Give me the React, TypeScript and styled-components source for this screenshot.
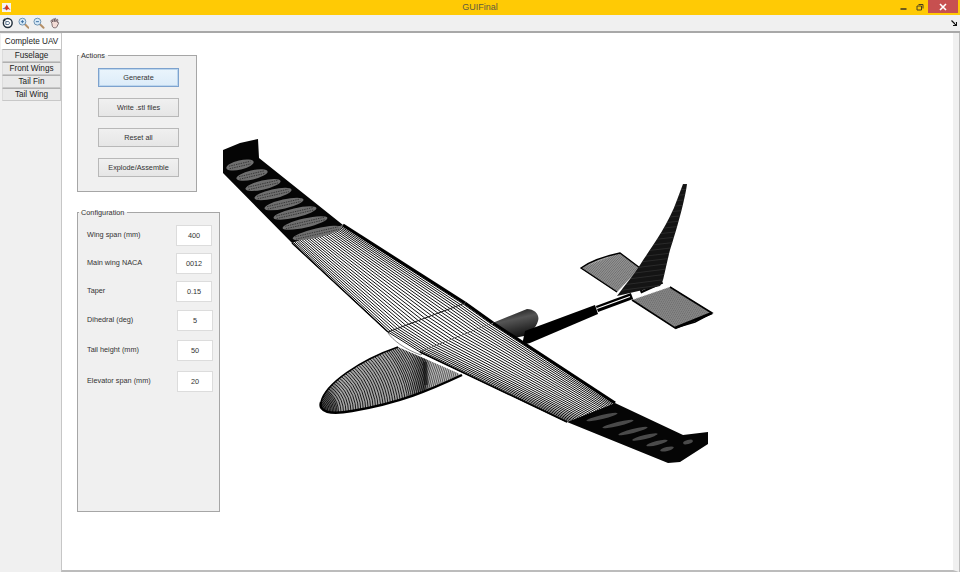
import React from "react";
import styled, { createGlobalStyle } from "styled-components";

const Global = createGlobalStyle`
  html, body { margin: 0; padding: 0; background: #f0f0f0; }
  #root { width: 960px; height: 572px; overflow: hidden; }
`;

const Win = styled.div`
  width: 960px; height: 572px; display: flex; flex-direction: column;
  font-family: "Liberation Sans", Arial, sans-serif; color: #333; background: #f0f0f0;
`;
const TitleBar = styled.div`
  height: 15px; background: #ffca05; display: flex; align-items: flex-start; flex: none;
`;
const AppIcon = styled.div`
  width: 9px; height: 9px; margin: 3px 0 0 2px; background: #f4f4f4; display: flex;
`;
const Title = styled.div`
  flex: 1; text-align: center; font-size: 9px; line-height: 15px; color: #5f5a40; padding-left: 54px;
`;
const WinControls = styled.div`
  display: flex; align-items: flex-start; gap: 1px; padding-right: 2px;
`;
const WinBtn = styled.div<{ $w: number }>`
  width: ${p => p.$w}px; height: 13px; display: flex; align-items: center; justify-content: center;
`;
const CloseBtn = styled.div`
  width: 30px; height: 13px; background: #c75050; display: flex; align-items: center; justify-content: center;
`;
const ToolBar = styled.div`
  height: 16px; flex: none; display: flex; align-items: center; padding: 0 3px 0 2px; gap: 4px;
  background: #f0f0f0; border-bottom: 2px solid #a8a8a8;
`;
const ToolIcon = styled.div`
  width: 11.5px; height: 12px; display: flex; align-items: center; justify-content: center;
`;
const Spacer = styled.div`flex: 1;`;
const Body = styled.div`
  flex: 1; display: flex; min-height: 0;
`;
const Side = styled.div`
  width: 61px; flex: none; padding: 1px 0 0 1px; box-sizing: border-box; display: flex; flex-direction: column;
  align-items: stretch;
`;
const ActiveTab = styled.div`
  height: 15px; background: #fff; font-size: 8.2px; line-height: 16px; text-align: center; color: #222;
  margin-right: -1px;
`;
const Tab = styled.div`
  height: 13px; box-sizing: border-box; margin-left: 1px; background: #e9e9e9; border: 1px solid #c8c8c8;
  border-top-color: #b0b0b0; border-left-color: #dcdcdc; font-size: 8.2px; line-height: 11px; text-align: center; color: #222;
`;
const Frame = styled.div`
  flex: 1; display: flex; background: #fff; min-width: 0; border-left: 1px solid #c6c6c6;
  border-bottom: 2px solid #bcbcbc; border-right: 6px solid #f0f0f0;
  box-shadow: 1px 0 0 #bcbcbc;
  margin-right: 1px;
  padding-bottom: 2px;
`;
const Column = styled.div`
  width: 158px; flex: none; padding: 17px 0 0 15px; box-sizing: border-box; display: flex; flex-direction: column;
  gap: 15px; align-items: flex-start;
`;
const Group = styled.fieldset<{ $w: number; $h: number }>`
  width: ${p => p.$w}px; height: ${p => p.$h}px; box-sizing: border-box; margin: 0; padding: 0;
  background: #f0f0f0; border: 1px solid #a6a6a6; display: block; min-width: 0;
`;
const Legend = styled.legend`
  font-size: 7.3px; line-height: 10px; padding: 0 3px 0 2px; margin-left: 1px; color: #333;
  transform: translateY(1px);
`;
const Actions = styled.div`
  display: flex; flex-direction: column; gap: 11px; padding: 8px 0 0 20px;
`;
const Btn = styled.button<{ $primary?: boolean }>`
  width: 81px; height: 19px; box-sizing: border-box; padding: 0; font-family: inherit; font-size: 7.3px; color: #333;
  background: ${p => (p.$primary ? "linear-gradient(#eaf4fc, #dcecf9)" : "linear-gradient(#f0f0f0, #e6e6e6)")};
  border: 1px solid ${p => (p.$primary ? "#7da2ce" : "#b8b8b8")};
  box-shadow: ${p => (p.$primary ? "0 0 0 1px #bcd6ee inset" : "none")};
`;
const Rows = styled.div`
  display: flex; flex-direction: column; padding-top: 8px;
`;
const Row = styled.div<{ $top: number; $inset: number }>`
  display: flex; align-items: flex-start; margin-top: ${p => p.$top}px; padding-left: 9px; height: 20px;
  & > input { margin-left: ${p => p.$inset}px; }
`;
const Label = styled.label`
  width: 89px; flex: none; font-size: 7.3px; line-height: 10px; padding-top: 4.5px; color: #333;
`;
const Field = styled.input`
  width: 36px; height: 21px; box-sizing: border-box; padding: 0; border: 1px solid #dcdcdc; background: #fff;
  font-family: inherit; font-size: 7.3px; text-align: center; color: #333; outline: none;
`;
const Canvas = styled.svg`
  flex: 1; display: block; width: 733px; height: 535px; filter: blur(0.4px);
`;

type P = [number, number];
const lerp = (a: P, b: P, t: number): P => [a[0] + (b[0] - a[0]) * t, a[1] + (b[1] - a[1]) * t];
const f = (n: number) => n.toFixed(1);

function spanLines(a: P, b: P, c: P, d: P, n: number) {
  let s = "";
  for (let i = 0; i <= n; i++) {
    const u = i / n;
    const t = 0.72 * u + 0.28 * (1 - Math.cos(Math.PI * u)) / 2;
    const p = lerp(a, b, t);
    const q = lerp(c, d, t);
    s += `M${f(p[0])} ${f(p[1])}L${f(q[0])} ${f(q[1])}`;
  }
  return s;
}
function hatch(a: P, b: P, c: P, d: P, n: number) {
  let s = "";
  for (let i = 0; i <= n; i++) {
    const p = lerp(a, b, i / n);
    const q = lerp(c, d, i / n);
    s += `M${f(p[0])} ${f(p[1])}L${f(q[0])} ${f(q[1])}`;
  }
  return s;
}
const poly = (...pts: P[]) => pts.map(p => p.join(",")).join(" ");

const leftPods: [number, number, number][] = [
  [240, 165, 14], [252, 175, 16], [263, 185, 18], [273, 194, 19],
  [284, 204, 20], [295, 213, 22], [305, 223, 23], [317, 233, 25],
];
const rightPods: [number, number, number][] = [
  [602, 417, 16], [618, 424, 16], [633, 431, 15], [645, 437, 13], [657, 443, 11], [667, 449, 7], [688, 442, 5],
];
const FIN = "M683 184L687 184C685 200 676 232 670 250C667 262 665 272 663 280L660 286L617 296C625 285 633 276 640 265C648 252 668 226 677 200Z";

function Plane() {
  const rings: number[] = [];
  let r = 3;
  while (r < 150) { rings.push(r); r += r < 25 ? 1.5 : r < 95 ? 2.5 : 2; }
  return (
    <Canvas viewBox="220 33 733 535" xmlns="http://www.w3.org/2000/svg">
      <defs>
        <clipPath id="body">
          <path d="M321 402C325 384 360 360 398 347L462 375C430 390 400 403 352 411C330 415 318 412 321 402Z" />
        </clipPath>
        <clipPath id="fin"><path d={FIN} /></clipPath>
        <linearGradient id="rear" x1="0" y1="0" x2="0.35" y2="1">
          <stop offset="0" stopColor="#000" />
          <stop offset="0.45" stopColor="#555" />
          <stop offset="1" stopColor="#111" />
        </linearGradient>
        <linearGradient id="fade" x1="0" y1="0" x2="1" y2="0">
          <stop offset="0" stopColor="#000" stopOpacity="0.6" />
          <stop offset="0.14" stopColor="#000" stopOpacity="0" />
          <stop offset="0.62" stopColor="#000" stopOpacity="0" />
          <stop offset="0.73" stopColor="#000" stopOpacity="0.5" />
          <stop offset="0.78" stopColor="#fff" stopOpacity="0.25" />
          <stop offset="1" stopColor="#fff" stopOpacity="0.3" />
        </linearGradient>
      </defs>

      {/* rear fuselage and boom */}
      <path d="M490 324L527 309C535 309 540 315 538 321C536 328 530 333 524 336L505 340Z" fill="url(#rear)" />
      <polygon points={poly([525, 331], [595, 305], [598, 314], [530, 343], [522, 345])} fill="#000" />
      <path d="M597 309L632 296" stroke="#000" strokeWidth="6.5" />
      <path d="M597 308.5L630 296.5" stroke="#fff" strokeWidth="1.3" />
      <path d="M640 291L662 281" stroke="#000" strokeWidth="5.5" />
      <path d="M642 290L661 282" stroke="#fff" strokeWidth="1.1" />

      {/* tail surfaces */}
      <path d="M581 268C592 260 606 256 620 253L640 268L617 292Z" fill="#a8a8a8" />
      <path d={hatch([581, 268], [620, 253], [617, 292], [640, 268], 26)} stroke="#000" strokeWidth="0.35" fill="none" />
      <path d="M617 292L581 268C592 260 606 256 620 253L640 268" fill="none" stroke="#000" strokeWidth="1.4" />
      <polygon points={poly([632, 300], [670, 287], [712, 313], [695, 322], [675, 328])} fill="#a8a8a8" />
      <path d={hatch([632, 300], [670, 287], [675, 328], [712, 313], 28)} stroke="#000" strokeWidth="0.35" fill="none" />
      <path d="M632 300L675 328L695 322L712 313L670 287" fill="none" stroke="#000" strokeWidth="1.6" />
      <path d="M675 328L712 313" fill="none" stroke="#000" strokeWidth="2.6" />
      <path d={FIN} fill="#141414" />
      <g clipPath="url(#fin)">
        <path d={hatch([617, 296], [683, 184], [663, 290], [690, 184], 20)} stroke="#666" strokeWidth="0.4" fill="none" opacity="0.7" />
      </g>

      {/* fuselage */}
      <path d="M321 402C325 384 360 360 398 347L462 375C430 390 400 403 352 411C330 415 318 412 321 402Z" fill="#a6a6a6" />
      <g clipPath="url(#body)">
        <g fill="none" stroke="#000" strokeWidth="0.85">
          {rings.map(v => <circle key={v} cx={313} cy={412} r={v} />)}
        </g>
        <rect x="321" y="340" width="142" height="76" fill="url(#fade)" />
        <path d="M425 362L426 385" stroke="#111" strokeWidth="4" opacity="0.6" />
      </g>
      <path d="M321 402C325 384 360 360 398 347" fill="none" stroke="#000" strokeWidth="1.6" />
      <path d="M462 375C430 390 400 403 352 411C330 415 318 412 321 402" fill="none" stroke="#000" strokeWidth="2.4" />

      {/* wing root cut-out */}
      <path d="M388 333C393 340 404 349 421 355L426 349L392 328Z" fill="#fff" stroke="#333" strokeWidth="0.6" />

      {/* left wing */}
      <polygon points={poly([292, 243], [343, 225], [465, 303], [388, 332])} fill="#fff" />
      <path d={spanLines([343, 225], [292, 243], [465, 303], [388, 332], 27)} stroke="#000" strokeWidth="0.95" fill="none" />
      <path d="M343 225L465 303" stroke="#000" strokeWidth="3" />
      <path d="M292 243L388 332" stroke="#000" strokeWidth="1.4" />

      {/* centre section */}
      <polygon points={poly([388, 332], [465, 303], [493, 323], [420, 352])} fill="#fff" />
      <path d={spanLines([465, 303], [388, 332], [493, 323], [420, 352], 27)} stroke="#000" strokeWidth="0.95" fill="none" />
      <path d="M465 303L493 323" stroke="#000" strokeWidth="3" />
      <path d="M388 332L465 303M420 352L493 323" stroke="#111" strokeWidth="1" fill="none" />

      {/* right wing */}
      <polygon points={poly([420, 352], [493, 323], [615, 403], [567, 422])} fill="#fff" />
      <path d={spanLines([493, 323], [420, 352], [615, 403], [567, 422], 27)} stroke="#000" strokeWidth="0.95" fill="none" />
      <path d="M493 323L615 403" stroke="#000" strokeWidth="3" />
      <path d="M420 352L567 422" stroke="#000" strokeWidth="1.6" />

      {/* left tip */}
      <polygon points={poly([223, 150], [240, 143], [258, 139], [259, 158], [343, 225], [292, 243], [223, 173])} fill="#050505" />
      {leftPods.map(([x, y, rx]) => (
        <g key={x} transform={`rotate(-13 ${x} ${y})`}>
          <ellipse cx={x} cy={y} rx={rx} ry={4.6} fill="#6f6f6f" />
          <path d={`M${x - rx + 3} ${y - 1.3}H${x + rx - 3}M${x - rx + 3} ${y + 1.3}H${x + rx - 3}`} stroke="#222" strokeWidth="0.7" strokeDasharray="1.4 1" />
        </g>
      ))}

      {/* right tip */}
      <polygon points={poly([567, 422], [615, 403], [683, 435], [708, 432], [708, 444], [680, 462], [668, 463])} fill="#050505" />
      {rightPods.map(([x, y, rx]) => (
        <g key={x} transform={`rotate(-14 ${x} ${y})`}>
          <ellipse cx={x} cy={y} rx={rx} ry={2} fill="#4a4a4a" />
        </g>
      ))}
    </Canvas>
  );
}

const LensIcon = ({ minus }: { minus?: boolean }) => (
  <svg width="12" height="12" viewBox="0 0 12 12">
    <path d="M7 7L11 11" stroke="#b58f66" strokeWidth="2" strokeLinecap="round" />
    <circle cx="4.6" cy="4.6" r="3.6" fill="#d7e9f7" stroke="#6a8fb0" strokeWidth="1" />
    <path d={minus ? "M3 4.6H6.2" : "M3 4.6H6.2M4.6 3V6.2"} stroke="#3b6ea0" strokeWidth="1" />
  </svg>
);

const rows: { label: string; value: string; top: number; inset: number }[] = [
  { label: "Wing span (mm)", value: "400", top: 0, inset: 0 },
  { label: "Main wing NACA", value: "0012", top: 8, inset: 0 },
  { label: "Taper", value: "0.15", top: 8, inset: 0 },
  { label: "Dihedral (deg)", value: "5", top: 9, inset: 1 },
  { label: "Tail height (mm)", value: "50", top: 10, inset: 1 },
  { label: "Elevator span (mm)", value: "20", top: 11, inset: 1 },
];

export default function App() {
  return (
    <Win>
      <Global />
      <TitleBar>
        <AppIcon>
          <svg width="9" height="9" viewBox="0 0 9 9">
            <path d="M0.5 6L3 4.5L4.8 1.5L6.5 4.5L8.5 7L6 6L4.5 7.5L3 5.8Z" fill="#d9361e" />
            <path d="M0.5 6L3 4.5L3.5 6.2Z" fill="#5a87b8" />
          </svg>
        </AppIcon>
        <Title>GUIFinal</Title>
        <WinControls>
          <WinBtn $w={16}>
            <svg width="7" height="7" viewBox="0 0 7 7"><path d="M0.5 6H6.5" stroke="#4a4020" strokeWidth="1.6" /></svg>
          </WinBtn>
          <WinBtn $w={15}>
            <svg width="8" height="8" viewBox="0 0 8 8">
              <path d="M2.5 1.5H7V5.5M1 3H5.5V7H1Z" fill="none" stroke="#4a4020" strokeWidth="1" />
            </svg>
          </WinBtn>
          <CloseBtn>
            <svg width="8" height="8" viewBox="0 0 8 8"><path d="M1 1L7 7M7 1L1 7" stroke="#fff" strokeWidth="1.6" /></svg>
          </CloseBtn>
        </WinControls>
      </TitleBar>
      <ToolBar>
        <ToolIcon>
          <svg width="12" height="12" viewBox="0 0 12 12">
            <circle cx="6" cy="6" r="4.6" fill="#fff" stroke="#23303c" strokeWidth="1.5" />
            <path d="M0.5 3.5L3 1L3.6 4.2Z" fill="#23303c" />
            <path d="M4 4.5H7C8 5 8 7 7 7.6H4Z" fill="none" stroke="#3d5a78" strokeWidth="0.9" />
          </svg>
        </ToolIcon>
        <ToolIcon><LensIcon /></ToolIcon>
        <ToolIcon><LensIcon minus /></ToolIcon>
        <ToolIcon>
          <svg width="12" height="12" viewBox="0 0 12 12">
            <path d="M3 6.5L2 4C1.8 3 3 2.8 3.3 3.6L4 5L3.8 2.4C3.8 1.5 5 1.4 5.2 2.3L5.6 4.6L5.8 1.6C6 0.8 7.1 0.9 7.1 1.8L7.2 4.8L8 2.6C8.3 1.8 9.4 2.1 9.2 3L8.8 5.5C9.4 5 10.4 5.5 10 6.3L8.4 9.6C8 10.7 7.3 11 6 11C4.4 11 3.8 10.4 3.4 9Z" fill="#f3dcd6" stroke="#5c4a50" strokeWidth="0.8" />
          </svg>
        </ToolIcon>
        <Spacer />
        <svg width="6" height="6" viewBox="0 0 6 6"><path d="M0.5 0.5L5 5M5.5 2V5.5H2" fill="none" stroke="#111" strokeWidth="1.2" /></svg>
      </ToolBar>
      <Body>
        <Side>
          <ActiveTab>Complete UAV</ActiveTab>
          <Tab>Fuselage</Tab>
          <Tab>Front Wings</Tab>
          <Tab>Tail Fin</Tab>
          <Tab>Tail Wing</Tab>
        </Side>
        <Frame>
          <Column>
            <Group $w={120} $h={142}>
              <Legend>Actions</Legend>
              <Actions>
                <Btn $primary>Generate</Btn>
                <Btn>Write .stl files</Btn>
                <Btn>Reset all</Btn>
                <Btn>Explode/Assemble</Btn>
              </Actions>
            </Group>
            <Group $w={143} $h={305}>
              <Legend>Configuration</Legend>
              <Rows>
                {rows.map(r => (
                  <Row key={r.label} $top={r.top} $inset={r.inset}>
                    <Label>{r.label}</Label>
                    <Field defaultValue={r.value} readOnly />
                  </Row>
                ))}
              </Rows>
            </Group>
          </Column>
          <Plane />
        </Frame>
      </Body>
    </Win>
  );
}
